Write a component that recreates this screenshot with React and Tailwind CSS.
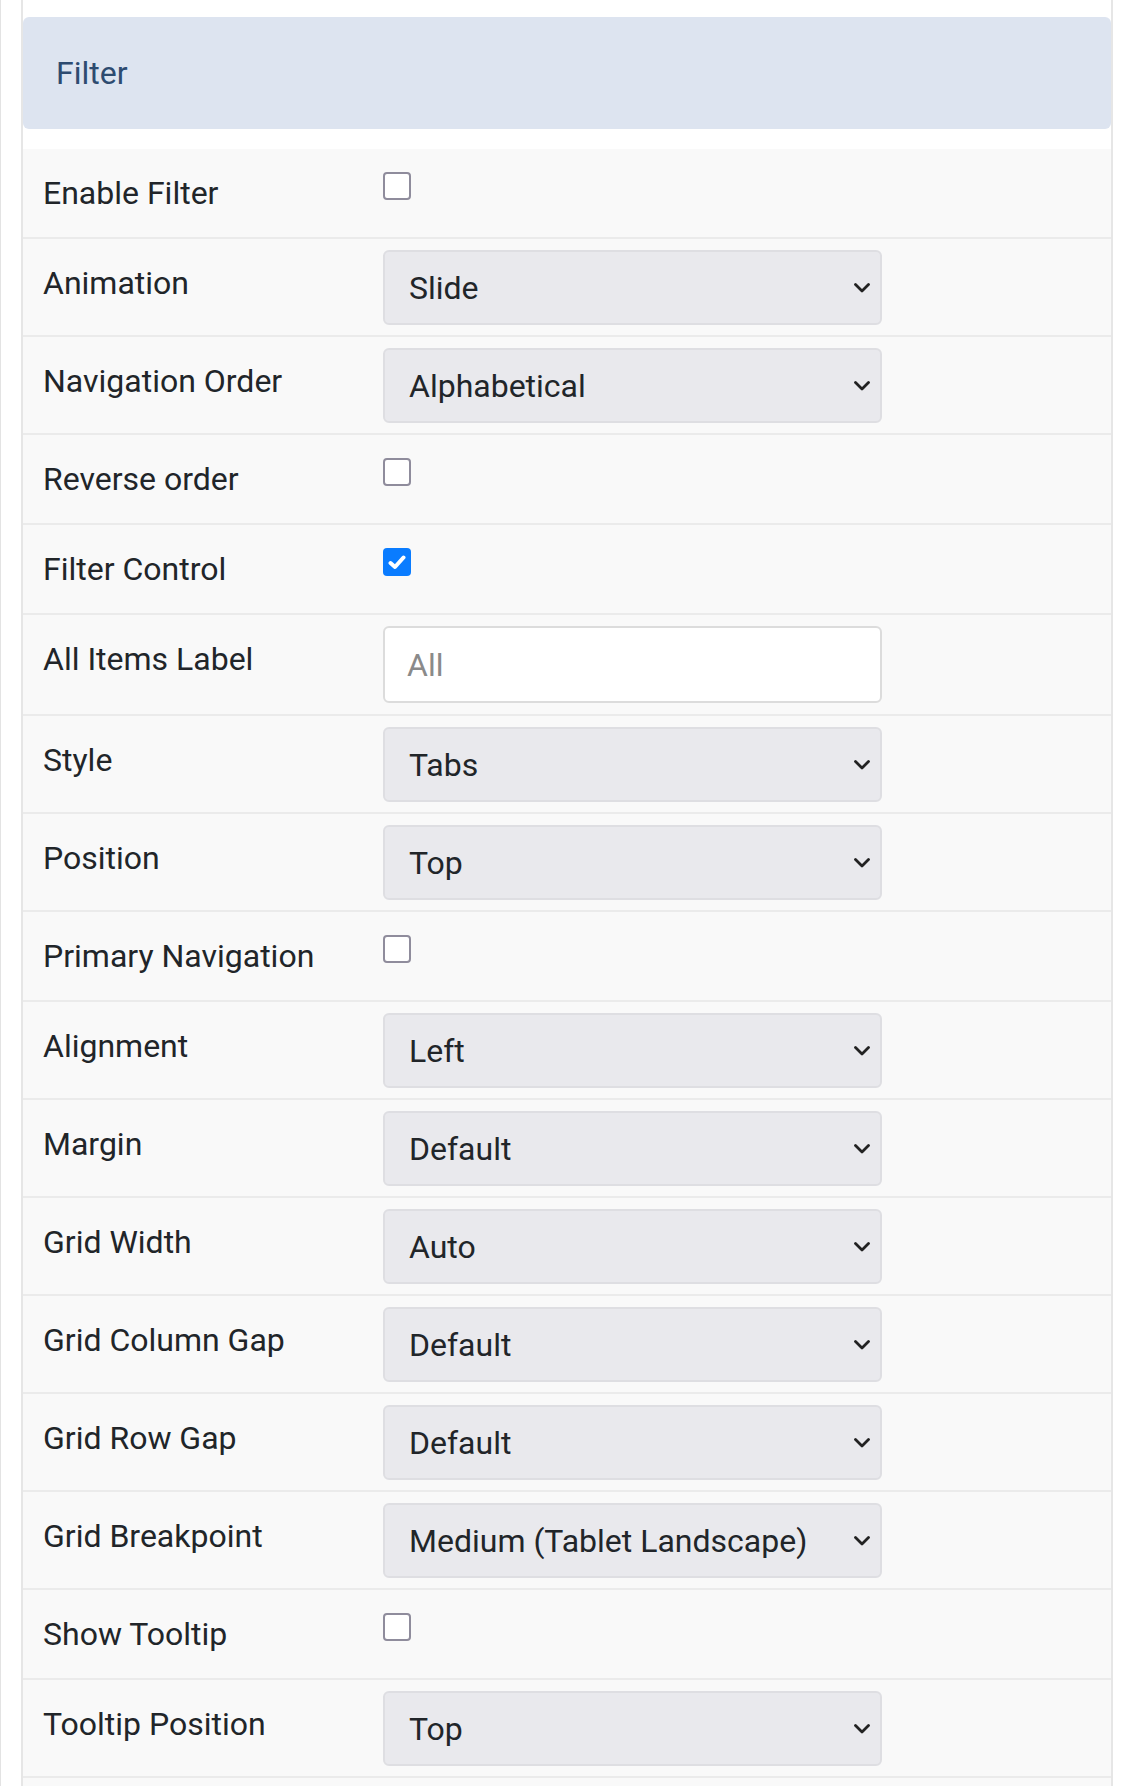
import React from 'react';

const ROWS = [
  { label: 'Enable Filter', type: 'check', checked: false },
  { label: 'Animation', type: 'select', value: 'Slide' },
  { label: 'Navigation Order', type: 'select', value: 'Alphabetical' },
  { label: 'Reverse order', type: 'check', checked: false },
  { label: 'Filter Control', type: 'check', checked: true },
  { label: 'All Items Label', type: 'input', placeholder: 'All' },
  { label: 'Style', type: 'select', value: 'Tabs' },
  { label: 'Position', type: 'select', value: 'Top' },
  { label: 'Primary Navigation', type: 'check', checked: false },
  { label: 'Alignment', type: 'select', value: 'Left' },
  { label: 'Margin', type: 'select', value: 'Default' },
  { label: 'Grid Width', type: 'select', value: 'Auto' },
  { label: 'Grid Column Gap', type: 'select', value: 'Default' },
  { label: 'Grid Row Gap', type: 'select', value: 'Default' },
  { label: 'Grid Breakpoint', type: 'select', value: 'Medium (Tablet Landscape)' },
  { label: 'Show Tooltip', type: 'check', checked: false },
  { label: 'Tooltip Position', type: 'select', value: 'Top' },
];

function Checkbox({ checked }) {
  if (checked) {
    return (
      <div className="mt-[23px] w-[28px] h-[28px] rounded-[4px] bg-[#0a7cff] flex items-center justify-center">
        <svg width="18" height="15" viewBox="0 0 18 15" fill="none">
          <path d="M2.5 8 L7 12 L15.5 2.5" stroke="#fff" strokeWidth="4" strokeLinecap="round" strokeLinejoin="round" />
        </svg>
      </div>
    );
  }
  return <div className="mt-[23px] w-[28px] h-[28px] rounded-[4px] border-2 border-[#8f8c9c] bg-white" />;
}

function Select({ value }) {
  return (
    <div className="mt-[11px] mb-[10px] w-[499px] h-[75px] rounded-[6px] border-2 border-[#dedee2] bg-[#e9e9ed] flex items-center justify-between pl-[24px] pr-[10px] text-[#212529]">
      <span>{value}</span>
      <svg width="16" height="10" viewBox="0 0 16 10" fill="none">
        <path d="M1.5 1.5 L8 8 L14.5 1.5" stroke="#222" strokeWidth="2.8" strokeLinecap="round" strokeLinejoin="round" />
      </svg>
    </div>
  );
}

function TextInput({ placeholder }) {
  return (
    <div className="mt-[11px] mb-[11px] w-[499px] h-[77px] rounded-[6px] border-2 border-[#dcdcdc] bg-white flex items-center pl-[22px] text-[#8a8a8a]">
      {placeholder}
    </div>
  );
}

export default function App() {
  return (
    <div className="w-[1130px] min-h-[1786px] bg-white border-l border-[#e3e3e3] font-['Roboto',sans-serif] text-[32px] leading-[48px]">
      <div className="ml-[20px] w-[1092px] min-h-[1786px] border-x-2 border-[#e6e6e6] pt-[17px]">
        {/* Header */}
        <div className="h-[112px] rounded-[6px] bg-[#dde4f0] flex items-center pl-[33px] text-[#2d4b70]">
          Filter
        </div>

        <div className="mt-[20px]">
          {ROWS.map(r => (
            <div key={r.label} className="flex items-start bg-[#f9f9f9] border-b-2 border-[#ebebeb]">
              <div className="w-[360px] shrink-0 pl-[20px] pt-[20px] pb-[20px] text-[#212529]">{r.label}</div>
              {r.type === 'check' && <Checkbox checked={r.checked} />}
              {r.type === 'select' && <Select value={r.value} />}
              {r.type === 'input' && <TextInput placeholder={r.placeholder} />}
            </div>
          ))}
          <div className="h-[60px] bg-[#f9f9f9]" />
        </div>
      </div>
    </div>
  );
}
